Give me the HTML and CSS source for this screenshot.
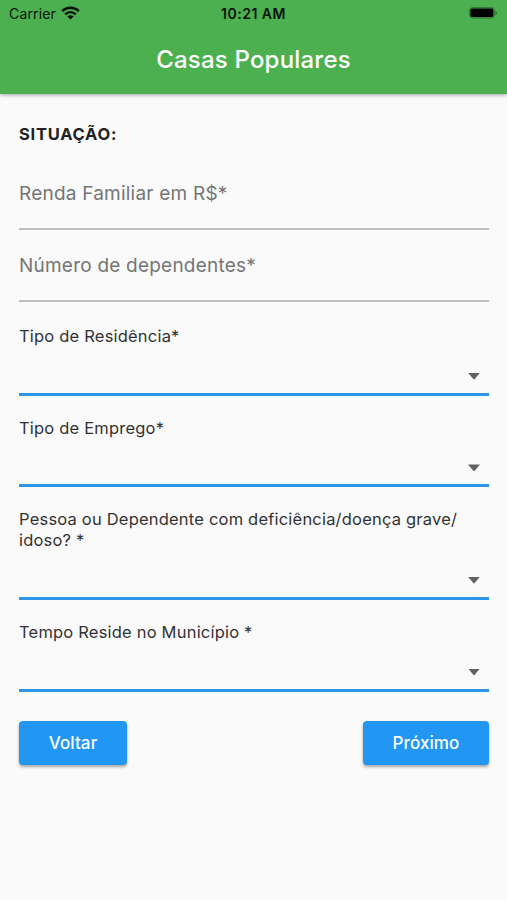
FILE: index.html
```html
<!DOCTYPE html>
<html lang="pt-BR">
<head>
    <meta charset="UTF-8">
    <meta name="viewport" content="width=device-width, initial-scale=1.0">
    <title>Casas Populares</title>
    <link rel="stylesheet" href="styles.css">
</head>
<body>

    <header class="app-bar">
        <div class="status-bar">
            <div class="carrier">
                <span>Carrier</span>
                <svg width="19" height="14" viewBox="0 0 19 14">
                    <path d="M1.2 5.1C5.8.6 13.2.6 17.8 5.1M4.2 8.3c3-2.9 7.6-2.9 10.6 0" fill="none" stroke="#071207" stroke-width="2.3"/>
                    <path d="M9.5 13.6L6.4 10.4c1.8-1.5 4.4-1.5 6.2 0z" fill="#071207"/>
                </svg>
            </div>
            <div class="clock">10:21 AM</div>
            <svg class="battery" width="29" height="12" viewBox="0 0 29 12">
                <rect x=".7" y=".7" width="24.6" height="10.2" rx="2.8" fill="none" stroke="#071207" stroke-opacity=".4"/>
                <rect x="1.4" y="1.6" width="23" height="8.4" rx="1.8" fill="#000"/>
                <path d="M26.5 4v4c1.8-.6 1.8-3.4 0-4z" fill="#071207" fill-opacity=".5"/>
            </svg>
        </div>
        <h1 class="title">Casas Populares</h1>
    </header>

    <form class="form">
        <h2 class="section">SITUAÇÃO:</h2>

        <!-- Campos de texto -->
        <div class="input">Renda Familiar em R$*</div>
        <div class="input">Número de dependentes*</div>

        <!-- Listas de seleção -->
        <div class="select">
            <label>Tipo de Residência*</label>
            <div class="dropdown"></div>
        </div>
        <div class="select">
            <label>Tipo de Emprego*</label>
            <div class="dropdown"></div>
        </div>
        <div class="select">
            <label>Pessoa ou Dependente com deficiência/doença grave/<br>idoso? *</label>
            <div class="dropdown"></div>
        </div>
        <div class="select">
            <label>Tempo Reside no Município *</label>
            <div class="dropdown"></div>
        </div>

        <div class="actions">
            <button type="button" class="voltar">Voltar</button>
            <button type="button" class="proximo">Próximo</button>
        </div>
    </form>

</body>
</html>
```
FILE: styles.css
```css
* {
    box-sizing: border-box;
}

body {
    margin: 0;
    min-height: 100vh;
    background-color: #fafafa;
    color: #222;
    font-family: Inter, "Liberation Sans", sans-serif;
}

/* Barra superior */
.app-bar {
    height: 94px;
    background-color: #4caf50;
    box-shadow: 0 1px 4px rgba(0, 0, 0, 0.35);
}

.status-bar {
    display: grid;
    grid-template-columns: 1fr auto 1fr;
    align-items: center;
    height: 26px;
    padding: 0 9px;
    color: #071207;
}

.carrier {
    display: flex;
    align-items: center;
    gap: 5px;
    font-size: 14px;
    letter-spacing: 0.15px;
}

.clock {
    font-size: 14px;
    font-weight: 600;
    letter-spacing: 0.5px;
}

.battery {
    justify-self: end;
}

.title {
    margin: 0;
    padding-top: 17px;
    color: #fff;
    font-size: 24px;
    font-weight: 500;
    line-height: 34px;
    letter-spacing: 0.2px;
    text-align: center;
}

/* Formulário */
.form {
    padding: 30px 18px 0 19px;
}

.section {
    margin: 0 0 28px;
    font-size: 16.5px;
    font-weight: 700;
    line-height: 20px;
    letter-spacing: 0.75px;
}

.input {
    height: 58px;
    margin-bottom: 14px;
    padding-top: 7px;
    border-bottom: 2px solid #bdbdbd;
    color: #757575;
    font-size: 19px;
    line-height: 30px;
    letter-spacing: 0.22px;
}

.select {
    margin-bottom: 22px;
    color: #333;
    font-size: 16.5px;
    line-height: 20.7px;
    letter-spacing: 0.2px;
}

.input + .select {
    margin-top: 24px;
}

.dropdown {
    display: flex;
    justify-content: flex-end;
    height: 49px;
    padding: 26px 9px 0 0;
    border-bottom: 3px solid #2c95e8;
}

/* Seta da lista */
.dropdown::after {
    content: "";
    width: 12px;
    height: 7px;
    background-color: #616161;
    clip-path: polygon(0 0, 100% 0, 50% 100%);
}

/* Botões */
.actions {
    display: flex;
    justify-content: space-between;
    margin-top: 29px;
}

.actions button {
    height: 44px;
    padding: 0;
    border: none;
    border-radius: 4px;
    background-color: #2196f3;
    box-shadow: 0 2px 3px rgba(0, 0, 0, 0.35);
    color: #fff;
    font-family: inherit;
    font-size: 17px;
    font-weight: 500;
    letter-spacing: 0.1px;
}

.voltar {
    width: 108px;
}

.proximo {
    width: 126px;
}
```
